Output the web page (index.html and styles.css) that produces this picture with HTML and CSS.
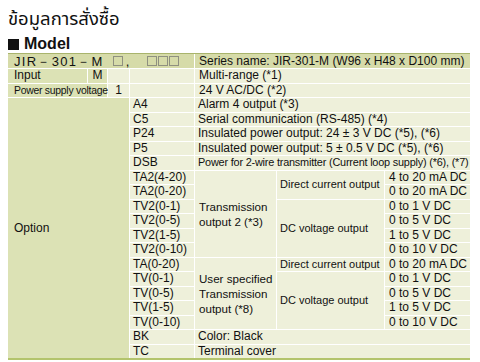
FILE: index.html
```html
<!DOCTYPE html>
<html lang="th">
<head>
<meta charset="utf-8">
<link rel="stylesheet" href="styles.css">
</head>
<body>
<div class="page">
  <h1 class="title">ข้อมูลการสั่งซื้อ</h1>
  <h2 class="heading"><span class="sq"></span>Model</h2>
  <div class="tbl">
    <div class="c hd model" style="grid-column: 1 / 5;"><span class="code">JIR－301－M</span><span class="box" aria-label="□"></span><span class="comma">,</span><span class="box" aria-label="□"></span><span class="box" aria-label="□"></span><span class="box" aria-label="□"></span></div>
    <div class="c hd" style="grid-column: 5 / 8;">Series name: JIR-301-M (W96 x H48 x D100 mm)</div>

    <div class="c lab">Input</div>
    <div class="c lab ctr">M</div>
    <div class="c"></div>
    <div class="c"></div>
    <div class="c" style="grid-column: 5 / 8;">Multi-range (*1)</div>

    <div class="c lab small" style="grid-column: 1 / 3;">Power supply voltage</div>
    <div class="c ctr">1</div>
    <div class="c"></div>
    <div class="c" style="grid-column: 5 / 8;">24 V AC/DC (*2)</div>

    <div class="c lab opt" style="grid-column: 1 / 4; grid-row: 4 / span 18;">Option</div>

    <div class="c code4">A4</div><div class="c desc" style="grid-column: 5 / 8;">Alarm 4 output (*3)</div>
    <div class="c code4">C5</div><div class="c desc" style="grid-column: 5 / 8;">Serial communication (RS-485) (*4)</div>
    <div class="c code4">P24</div><div class="c desc" style="grid-column: 5 / 8;">Insulated power output: 24 ± 3 V DC (*5), (*6)</div>
    <div class="c code4">P5</div><div class="c desc" style="grid-column: 5 / 8;">Insulated power output: 5 ± 0.5 V DC (*5), (*6)</div>
    <div class="c code4">DSB</div><div class="c desc tight" style="grid-column: 5 / 8;">Power for 2-wire transmitter (Current loop supply) (*6), (*7)</div>

    <div class="c code4" style="grid-row: 9;">TA2(4-20)</div>
    <div class="c code4" style="grid-row: 10;">TA2(0-20)</div>
    <div class="c code4" style="grid-row: 11;">TV2(0-1)</div>
    <div class="c code4" style="grid-row: 12;">TV2(0-5)</div>
    <div class="c code4" style="grid-row: 13;">TV2(1-5)</div>
    <div class="c code4" style="grid-row: 14;">TV2(0-10)</div>
    <div class="c multi" style="grid-column: 5; grid-row: 9 / span 6;">Transmission output 2 (*3)</div>
    <div class="c mid" style="grid-column: 6; grid-row: 9 / span 2;">Direct current output</div>
    <div class="c mid" style="grid-column: 6; grid-row: 11 / span 4;">DC voltage output</div>
    <div class="c val" style="grid-column: 7; grid-row: 9;">4 to 20 mA DC</div>
    <div class="c val" style="grid-column: 7; grid-row: 10;">0 to 20 mA DC</div>
    <div class="c val" style="grid-column: 7; grid-row: 11;">0 to 1 V DC</div>
    <div class="c val" style="grid-column: 7; grid-row: 12;">0 to 5 V DC</div>
    <div class="c val" style="grid-column: 7; grid-row: 13;">1 to 5 V DC</div>
    <div class="c val" style="grid-column: 7; grid-row: 14;">0 to 10 V DC</div>

    <div class="c code4" style="grid-row: 15;">TA(0-20)</div>
    <div class="c code4" style="grid-row: 16;">TV(0-1)</div>
    <div class="c code4" style="grid-row: 17;">TV(0-5)</div>
    <div class="c code4" style="grid-row: 18;">TV(1-5)</div>
    <div class="c code4" style="grid-row: 19;">TV(0-10)</div>
    <div class="c multi" style="grid-column: 5; grid-row: 15 / span 5;">User specified Transmission output (*8)</div>
    <div class="c mid" style="grid-column: 6; grid-row: 15;">Direct current output</div>
    <div class="c mid" style="grid-column: 6; grid-row: 16 / span 4;">DC voltage output</div>
    <div class="c val" style="grid-column: 7; grid-row: 15;">0 to 20 mA DC</div>
    <div class="c val" style="grid-column: 7; grid-row: 16;">0 to 1 V DC</div>
    <div class="c val" style="grid-column: 7; grid-row: 17;">0 to 5 V DC</div>
    <div class="c val" style="grid-column: 7; grid-row: 18;">1 to 5 V DC</div>
    <div class="c val" style="grid-column: 7; grid-row: 19;">0 to 10 V DC</div>

    <div class="c code4" style="grid-row: 20;">BK</div>
    <div class="c desc" style="grid-column: 5 / 8; grid-row: 20;">Color: Black</div>
    <div class="c code4" style="grid-row: 21;">TC</div>
    <div class="c desc" style="grid-column: 5 / 8; grid-row: 21;">Terminal cover</div>
  </div>
</div>
</body>
</html>
```

FILE: styles.css
```css
* { box-sizing: border-box; }
html, body { margin: 0; padding: 0; background: #fff; }
body { width: 480px; height: 362px; overflow: hidden; font-family: "Liberation Sans", Arial, sans-serif; color: #111; }
.page { padding: 7px 10px 0 8px; }
.title {
  margin: 0;
  font-family: "Noto Sans Thai", "Tahoma", "Noto Sans", "DejaVu Sans", sans-serif;
  font-weight: normal;
  font-size: 18.5px;
  line-height: 24px;
  height: 24px;
}
.heading {
  margin: 4px 0 0 0;
  font-size: 16px;
  font-weight: bold;
  line-height: 18px;
  height: 18px;
  display: flex;
  align-items: center;
  gap: 5px;
}
.sq { display: inline-block; width: 11px; height: 11px; background: #111; }
.tbl {
  display: grid;
  grid-template-columns: 79px 19px 21px 64px 81px 107px 85px;
  grid-template-rows: 14px repeat(20, 13.5px);
  gap: 1px;
  width: 462px;
  background: #fff;
  border-top: 1px solid #a9b46c;
  border-bottom: 2px solid #b3c46c;
  font-size: 12px;
}
.c {
  background: #eef0da;
  display: flex;
  align-items: center;
  padding-left: 4px;
  white-space: nowrap;
  line-height: 13px;
}
.hd { background: #d6dba9; }
.model { padding-left: 6px; font-size: 13px; }
.model .code { letter-spacing: 1.3px; }
.model .box {
  display: inline-block;
  width: 10px;
  height: 10px;
  border: 1px solid #8f9080;
  margin-right: 1px;
}
.model .code + .box { margin-left: 9px; }
.model .comma { margin: 0 18px 0 2px; }
.lab { background: #dce2b5; padding-left: 6px; }
.ctr { justify-content: center; padding-left: 0; }
.small { font-size: 10.4px; letter-spacing: -0.25px; }
.opt { background: #dce2b5; }
.code4 { grid-column: 4; padding-left: 3px; }
.desc { padding-left: 3px; }
.tight { font-size: 10.9px; letter-spacing: -0.2px; }
.multi { white-space: normal; line-height: 15px; font-size: 11.6px; }
.mid { padding-left: 3px; font-size: 11px; }
.val { padding-left: 4px; }
```
